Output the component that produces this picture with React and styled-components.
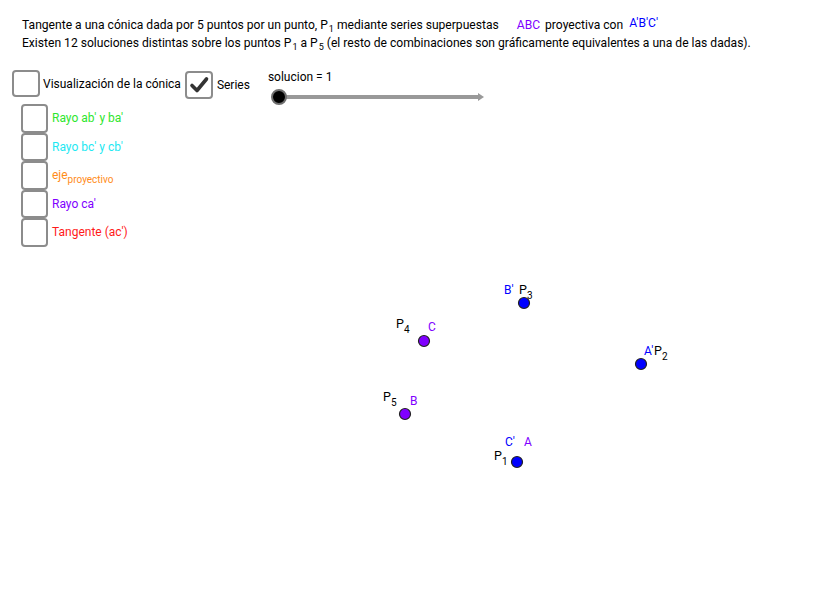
import React from "react";
import styled, { createGlobalStyle } from "styled-components";

const GlobalStyle = createGlobalStyle`
  html, body {
    margin: 0;
    padding: 0;
    background: #fff;
  }
  body {
    font-family: Roboto, "Liberation Sans", sans-serif;
    color: #000;
  }
`;

const Page = styled.div`
  width: 838px;
  height: 594px;
  overflow: hidden;
  position: relative;
  background: #fff;
`;

const Header = styled.div`
  box-sizing: border-box;
  height: 62px;
  padding: 16px 0 0 22px;
  font-size: 12.1px;
  line-height: 18px;
  white-space: nowrap;
`;

const Sub = styled.sub`
  font-size: 9px;
  line-height: 0;
  vertical-align: -3px;
  margin-left: 1px;
`;

const Colored = styled.span`
  color: ${(p) => p.$color};
  margin-left: ${(p) => p.$gap || 0}px;
  position: relative;
  top: ${(p) => p.$lift || 0}px;
`;

const ControlsRow = styled.div`
  box-sizing: border-box;
  height: 42px;
  display: flex;
  align-items: flex-start;
  padding: 8px 0 0 12px;
`;

const Toggle = styled.label`
  display: flex;
  align-items: center;
  margin-top: ${(p) => p.$top || 0}px;
  margin-left: ${(p) => p.$left || 0}px;
  font-size: 12px;
  color: ${(p) => p.$color || "#000"};
`;

const Box = styled.span`
  box-sizing: border-box;
  width: ${(p) => p.$w}px;
  height: ${(p) => p.$h}px;
  border: 2px solid #8c8c8c;
  border-radius: 4px;
  background: #fff;
  display: flex;
  align-items: center;
  justify-content: center;
  flex-shrink: 0;
`;

const ToggleText = styled.span`
  margin-left: ${(p) => p.$gap || 3}px;
  white-space: nowrap;
`;

const Slider = styled.div`
  margin-left: 18px;
  width: 230px;
`;

const SliderLabel = styled.div`
  font-size: 12px;
  line-height: 14px;
`;

const Track = styled.div`
  position: relative;
  margin: 11px 0 0 11px;
  width: 200px;
  height: 4px;
  background: #999;

  &::after {
    content: "";
    position: absolute;
    right: -5px;
    top: -2px;
    border-left: 6px solid #999;
    border-top: 4px solid transparent;
    border-bottom: 4px solid transparent;
  }
`;

const Knob = styled.span`
  position: absolute;
  left: -8px;
  top: -6px;
  box-sizing: border-box;
  width: 16px;
  height: 16px;
  border-radius: 50%;
  background: #000;
  border: 2px solid #6f6f6f;
`;

const List = styled.div`
  height: 146px;
  padding-left: 21px;
  display: flex;
  flex-direction: column;
`;

const ListRow = styled.label`
  display: flex;
  align-items: center;
  height: 28.5px;
  font-size: 12px;
  color: ${(p) => p.$color};
`;

const LowSub = styled.sub`
  font-size: 10px;
  line-height: 0;
  vertical-align: -4px;
`;

const Canvas = styled.svg`
  display: block;
  width: 838px;
  height: 344px;
  font-family: Roboto, "Liberation Sans", sans-serif;
`;

const BLUE = "#0000ff";
const PURPLE = "#8000ff";

const points = [
  { x: 524, y: 303, fill: BLUE },
  { x: 424, y: 341, fill: PURPLE },
  { x: 641, y: 364, fill: BLUE },
  { x: 405, y: 414, fill: PURPLE },
  { x: 517, y: 462, fill: BLUE },
];

const pLabels = [
  { x: 519, y: 294, n: "3" },
  { x: 396, y: 328, n: "4" },
  { x: 654, y: 355, n: "2" },
  { x: 383, y: 401, n: "5" },
  { x: 494, y: 460, n: "1" },
];

const letters = [
  { x: 504, y: 294, t: "B'", c: BLUE },
  { x: 428, y: 331, t: "C", c: PURPLE },
  { x: 644, y: 355, t: "A'", c: BLUE },
  { x: 410, y: 405, t: "B", c: PURPLE },
  { x: 505, y: 446, t: "C'", c: BLUE },
  { x: 524, y: 446, t: "A", c: PURPLE },
];

const rows = [
  { color: "#2ee62e", label: "Rayo ab' y ba'" },
  { color: "#1ee8f2", label: "Rayo bc' y cb'" },
  { color: "#ff8c1a", label: "eje", sub: "proyectivo" },
  { color: "#8000ff", label: "Rayo ca'" },
  { color: "#ff1a1a", label: "Tangente (ac')" },
];

export default function App() {
  return (
    <Page>
      <GlobalStyle />
      <Header>
        <div>
          Tangente a una cónica dada por 5 puntos por un punto, P<Sub>1</Sub> mediante series superpuestas
          <Colored $color={PURPLE} $gap={18}>ABC</Colored>
          <Colored $color="#000" $gap={5}>proyectiva con</Colored>
          <Colored $color={BLUE} $gap={6} $lift={-2}>A'B'C'</Colored>
        </div>
        <div>
          Existen 12 soluciones distintas sobre los puntos P<Sub>1</Sub> a P<Sub>5</Sub> (el resto de combinaciones son gráficamente equivalentes a una de las dadas).
        </div>
      </Header>

      <ControlsRow>
        <Toggle>
          <Box $w={28} $h={27} />
          <ToggleText>Visualización de la cónica</ToggleText>
        </Toggle>
        <Toggle $top={1} $left={4}>
          <Box $w={28} $h={28}>
            <svg width="22" height="22" viewBox="0 0 22 22">
              <path d="M4 11.5 L9 16.5 L18.5 5" fill="none" stroke="#333" strokeWidth="3.6" strokeLinecap="round" strokeLinejoin="round" />
            </svg>
          </Box>
          <ToggleText $gap={4}>Series</ToggleText>
        </Toggle>
        <Slider>
          <SliderLabel>solucion = 1</SliderLabel>
          <Track>
            <Knob />
          </Track>
        </Slider>
      </ControlsRow>

      <List>
        {rows.map((r) => (
          <ListRow key={r.label} $color={r.color}>
            <Box $w={27} $h={28.5} />
            <ToggleText $gap={4}>
              {r.label}
              {r.sub && <LowSub>{r.sub}</LowSub>}
            </ToggleText>
          </ListRow>
        ))}
      </List>

      <Canvas viewBox="0 250 838 344">
        {points.map((p, i) => (
          <circle key={i} cx={p.x} cy={p.y} r="5.5" fill={p.fill} stroke="#222" strokeWidth="1.2" />
        ))}
        {pLabels.map((l) => (
          <text key={l.n} x={l.x} y={l.y} fontSize="12.5" fill="#000">
            P<tspan fontSize="10" dy="5">{l.n}</tspan>
          </text>
        ))}
        {letters.map((l) => (
          <text key={l.t + l.x} x={l.x} y={l.y} fontSize="12" fill={l.c}>
            {l.t}
          </text>
        ))}
      </Canvas>
    </Page>
  );
}
